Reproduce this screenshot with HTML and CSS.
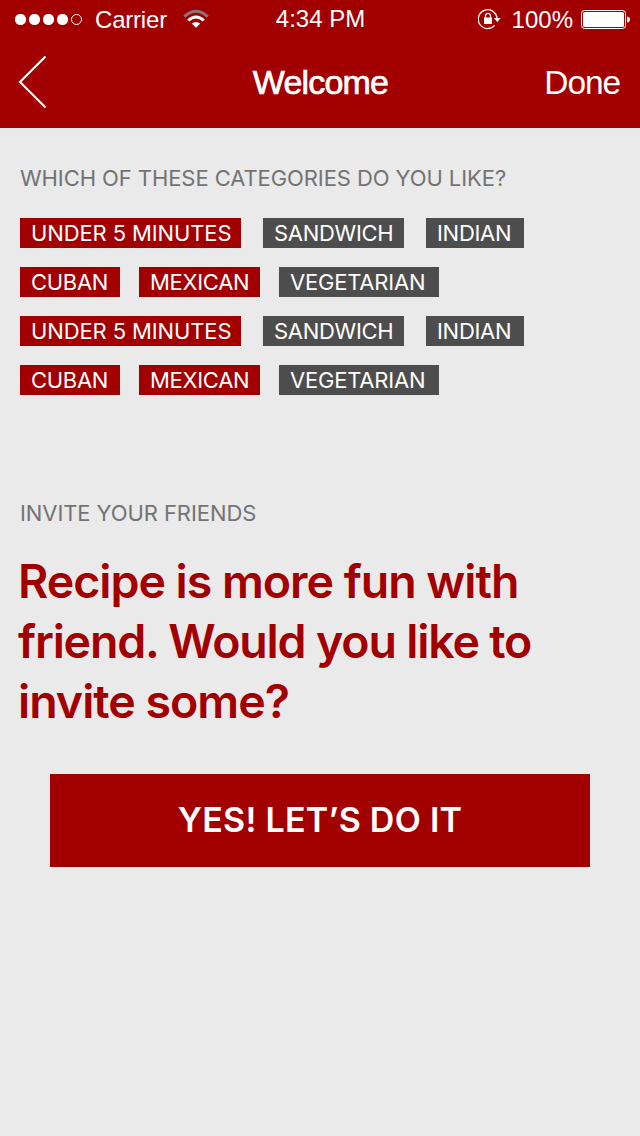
FILE: index.html
```html
<!DOCTYPE html>
<html lang="en">
<head>
<meta charset="utf-8">
<title>Welcome</title>
<link rel="stylesheet" href="styles.css">
</head>
<body>
<header class="header">
  <div class="status">
    <div class="status-left">
      <svg class="signal" width="68" height="12" viewBox="0 0 68 12" fill="#fff"><circle cx="5.5" cy="5.500" r="5.6"/><circle cx="19.5" cy="5.500" r="5.6"/><circle cx="33.5" cy="5.500" r="5.6"/><circle cx="47.5" cy="5.500" r="5.6"/><circle cx="61.5" cy="5.500" r="5" fill="none" stroke="#fff"/></svg>
      <span class="carrier">Carrier</span>
      <svg class="wifi" width="26" height="19" viewBox="0 0 26 19" fill="none" stroke-width="3"><path d="M1.300 7.600Q13 -3.200 24.700 7.600" stroke="#8a7676"/><path d="M5.200 11.500Q13 4.600 20.800 11.500" stroke="#fff"/><path d="M8.700 14.600Q13 11.200 17.300 14.600L13 18.800Z" fill="#fff" stroke="none"/></svg>
    </div>
    <span class="time">4:34 PM</span>
    <div class="status-right">
      <svg class="lock" width="24" height="22" viewBox="0 0 24 22"><path d="M16.700 17.400A9.400 9.400 0 1 1 19 10" fill="none" stroke="#fff" stroke-width="1.300"/><path d="M15.800 10H22.800L19.300 14Z" fill="#fff"/><path d="M6 9.500H14V16H6Z" fill="#fff"/><path d="M7.500 10V8a2.500 2.700 0 0 1 5 0V10" fill="none" stroke="#fff" stroke-width="1.300"/></svg>
      <span class="percent">100%</span>
      <svg class="battery" width="50" height="20" viewBox="0 0 50 20"><rect x=".5" y=".5" width="44" height="18" rx="3" fill="none" stroke="#fff"/><rect x="2" y="2" width="41" height="15" rx="1.500" fill="#fff"/><path d="M46 6.500Q49 7 49 9.500T46 12.500Z" fill="#fff"/></svg>
    </div>
  </div>
  <nav class="nav">
    <svg class="back" width="30" height="54" viewBox="0 0 30 54"><path d="M27.500 1.500L2 27L27.500 52.500" fill="none" stroke="#fff" stroke-width="2.200"/></svg>
    <h1 class="title">Welcome</h1>
    <span class="done">Done</span>
  </nav>
</header>
<main class="content">
  <h2 class="label question">WHICH OF THESE CATEGORIES DO YOU LIKE?</h2>
  <div class="tags">
    <div class="row wide"><span class="tag on minutes">UNDER 5 MINUTES</span><span class="tag sandwich">SANDWICH</span><span class="tag indian">INDIAN</span></div>
    <div class="row"><span class="tag on cuban">CUBAN</span><span class="tag on mexican">MEXICAN</span><span class="tag vegetarian">VEGETARIAN</span></div>
    <div class="row wide"><span class="tag on minutes">UNDER 5 MINUTES</span><span class="tag sandwich">SANDWICH</span><span class="tag indian">INDIAN</span></div>
    <div class="row"><span class="tag on cuban">CUBAN</span><span class="tag on mexican">MEXICAN</span><span class="tag vegetarian">VEGETARIAN</span></div>
  </div>
  <h2 class="label invite">INVITE YOUR FRIENDS</h2>
  <p class="pitch"><span class="line l1">Recipe is more fun with</span><span class="line l2">friend. Would you like to</span><span class="line l3">invite some?</span></p>
  <button class="cta">YES! LET’S DO IT</button>
</main>
</body>
</html>
```
FILE: styles.css
```css
* { box-sizing: border-box; }
body { margin: 0; width: 640px; height: 1136px; background: #eaeaea; font-family: Inter, "Open Sans", sans-serif; overflow: hidden; }
svg { display: block; flex: none; }
.header { height: 128px; background: #a20000; color: #fff; font-family: "Liberation Sans", Arial, sans-serif; }
.status { height: 40px; display: grid; grid-template-columns: 1fr auto 1fr; align-items: start; font-size: 24px; line-height: 28px; white-space: nowrap; }
.status-left { display: flex; padding-left: 15px; }
.signal { margin-top: 14px; }
.carrier { margin: 6px 0 0 12px; width: 72px; letter-spacing: -0.2px; }
.wifi { margin: 9px 0 0 16px; }
.time { margin-top: 5px; padding-left: 1px; }
.status-right { display: flex; justify-content: flex-end; padding-right: 9px; }
.lock { margin-top: 8px; }
.percent { margin: 6px 8px 0 10px; }
.battery { margin: 10px 0 0; }
.nav { height: 88px; display: grid; grid-template-columns: 1fr auto 1fr; align-items: start; padding: 0 20px 0 18px; line-height: 40px; }
.back { margin-top: 15px; }
.title { margin: 22px 0 0; padding-left: 3px; font-size: 34px; font-weight: 400; letter-spacing: -0.8px; -webkit-text-stroke: 0.7px #fff; }
.done { margin-top: 23px; font-size: 33.5px; letter-spacing: -1.1px; text-align: right; }
.content { padding: 0 20px; }
.label { margin: 0; font-size: 22px; line-height: 30px; font-weight: 400; color: #737373; white-space: nowrap; }
.question { padding-top: 35px; letter-spacing: -0.08px; }
.tags { display: flex; flex-direction: column; gap: 19px; margin-top: 25px; }
.row { display: flex; gap: 19px; }
.row.wide { gap: 22px; }
.tag { height: 30px; padding-left: 11px; font-size: 22px; line-height: 31px; color: #fff; background: #4d4d4d; letter-spacing: -0.3px; white-space: nowrap; }
.on { background: #a20000; }
.minutes { width: 221px; letter-spacing: -0.12px; }
.sandwich { width: 141px; }
.indian { width: 98px; }
.cuban { width: 100px; }
.mexican { width: 121px; }
.vegetarian { width: 160px; letter-spacing: -0.2px; }
.invite { margin-top: 103px; letter-spacing: -0.08px; }
.pitch { margin: 23px 0 0 -2px; font-size: 46.5px; line-height: 60px; font-weight: 600; color: #a20000; white-space: nowrap; }
.line { display: block; }
.l1 { letter-spacing: -1.02px; }
.l2 { letter-spacing: -1.18px; }
.l3 { letter-spacing: -1px; }
.cta { display: block; width: 540px; height: 93px; margin: 43px 0 0 30px; padding: 0 0 2px; border: 0; background: #a20000; color: #fff; font: 600 34px/91px Inter, "Open Sans", sans-serif; letter-spacing: 0.25px; }
```
